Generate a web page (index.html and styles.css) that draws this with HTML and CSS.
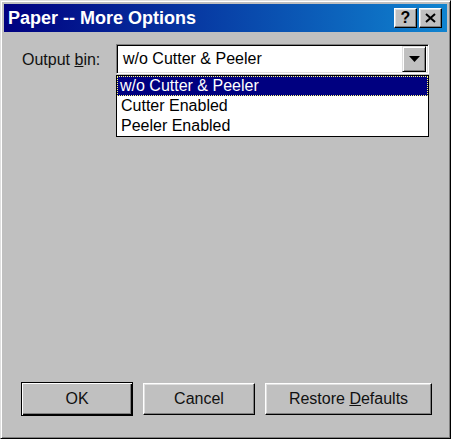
FILE: index.html
```html
<!DOCTYPE html>
<html>
<head>
<meta charset="utf-8">
<link rel="stylesheet" href="styles.css">
</head>
<body>
<div class="window">
  <div class="titlebar">
    <span class="title">Paper -- More Options</span>
    <div class="tbtns">
      <div class="tbtn">?</div>
      <div class="tbtn">
        <svg width="11" height="10" viewBox="0 0 11 10"><path d="M1 1 L10 9 M10 1 L1 9" stroke="#000" stroke-width="2"/></svg>
      </div>
    </div>
  </div>
  <div class="content">
    <div class="row">
      <label class="lbl">Output <u>b</u>in:</label>
      <div class="combo-wrap">
        <div class="combo">
          <span class="combo-text">w/o Cutter &amp; Peeler</span>
          <div class="arrow-btn">
            <svg width="11" height="6" viewBox="0 0 11 6"><path d="M0 0 H11 L5.5 6 Z" fill="#000"/></svg>
          </div>
        </div>
        <ul class="list">
          <li class="item sel">w/o Cutter &amp; Peeler</li>
          <li class="item">Cutter Enabled</li>
          <li class="item">Peeler Enabled</li>
        </ul>
      </div>
    </div>
    <div class="buttons">
      <div class="btn default"><span class="btn-in">OK</span></div>
      <div class="btn"><span class="btn-in">Cancel</span></div>
      <div class="btn wide"><span class="btn-in">Restore <u>D</u>efaults</span></div>
    </div>
  </div>
</div>
</body>
</html>
```

FILE: styles.css
```css
html, body {
  margin: 0;
  padding: 0;
  background: #c0c0c0;
}
body {
  font-family: "Liberation Sans", Arial, sans-serif;
  font-size: 16px;
  color: #000;
}
.window {
  width: 451px;
  height: 439px;
  box-sizing: border-box;
  background: #c0c0c0;
  border-top: 1px solid #dfdfdf;
  border-left: 1px solid #dfdfdf;
  border-right: 1px solid #000;
  border-bottom: 1px solid #000;
  box-shadow: inset 1px 1px 0 #fff, inset -1px -1px 0 #808080;
  padding: 3px;
  display: flex;
  flex-direction: column;
}
.titlebar {
  height: 28px;
  background: linear-gradient(to right, #000080, #1084d0);
  display: flex;
  align-items: center;
  justify-content: space-between;
  padding: 0 5px 0 4px;
  flex-shrink: 0;
}
.title {
  color: #fff;
  font-weight: bold;
  font-size: 18px;
}
.tbtns {
  display: flex;
  gap: 2px;
}
.tbtn {
  width: 23px;
  height: 20px;
  box-sizing: border-box;
  background: #c0c0c0;
  border-top: 1px solid #fff;
  border-left: 1px solid #fff;
  border-right: 1px solid #000;
  border-bottom: 1px solid #000;
  box-shadow: inset -1px -1px 0 #808080, inset 1px 1px 0 #dfdfdf;
  display: flex;
  align-items: center;
  justify-content: center;
  font-weight: bold;
  font-size: 16px;
  line-height: 1;
}
.content {
  flex: 1;
  display: flex;
  flex-direction: column;
  justify-content: space-between;
  padding: 12px 15px 19px 17px;
}
.row {
  display: flex;
  align-items: flex-start;
}
.lbl {
  width: 95px;
  padding-left: 1px;
  box-sizing: border-box;
  line-height: 32px;
  color: #111;
}
.combo-wrap {
  position: relative;
  width: 313px;
}
.combo {
  height: 30px;
  box-sizing: border-box;
  background: #fff;
  border-top: 1px solid #808080;
  border-left: 1px solid #808080;
  border-right: 1px solid #fff;
  border-bottom: 1px solid #fff;
  box-shadow: inset 1px 1px 0 #000, inset -1px -1px 0 #dfdfdf;
  display: flex;
  align-items: center;
  justify-content: space-between;
  padding: 2px 2px 2px 6px;
}
.combo-text {
  line-height: 20px;
}
.arrow-btn {
  width: 24px;
  height: 26px;
  box-sizing: border-box;
  background: #c0c0c0;
  border-top: 1px solid #dfdfdf;
  border-left: 1px solid #dfdfdf;
  border-right: 1px solid #000;
  border-bottom: 1px solid #000;
  box-shadow: inset 1px 1px 0 #fff, inset -1px -1px 0 #808080;
  display: flex;
  align-items: center;
  justify-content: center;
}
.list {
  position: absolute;
  left: 0;
  top: 31px;
  width: 313px;
  box-sizing: border-box;
  margin: 0;
  padding: 0;
  list-style: none;
  background: #fff;
  border: 1px solid #000;
}
.item {
  height: 20px;
  line-height: 20px;
  padding-left: 4px;
  box-sizing: border-box;
}
.item.sel {
  background: #000080;
  color: #fff;
  outline: 1px dotted #ffff80;
  outline-offset: -1px;
  padding-left: 3px;
}
.buttons {
  display: flex;
  align-items: center;
  gap: 10px;
}
.btn {
  width: 112px;
  height: 32px;
  box-sizing: border-box;
  background: #c0c0c0;
  border-top: 1px solid #fff;
  border-left: 1px solid #fff;
  border-right: 1px solid #000;
  border-bottom: 1px solid #000;
  box-shadow: inset -1px -1px 0 #808080, inset 1px 1px 0 #dfdfdf;
  display: flex;
  align-items: center;
  justify-content: center;
  color: #111;
}
.btn.default {
  height: 34px;
  border: 1px solid #000;
  box-shadow: inset 1px 1px 0 #fff, inset -1px -1px 0 #000, inset -2px -2px 0 #808080;
}
.btn.wide {
  width: 167px;
}
.btn-in {
  line-height: 1;
}
```
